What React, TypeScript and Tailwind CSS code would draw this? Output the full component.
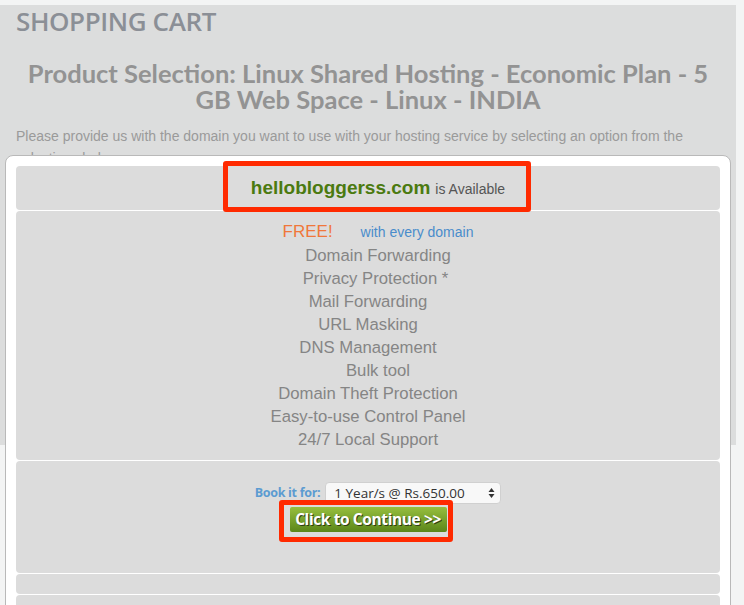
import React from "react";

const features: { label: string; pad: string }[] = [
  { label: "Domain Forwarding", pad: "pl-[20px]" },
  { label: "Privacy Protection *", pad: "pl-[15px]" },
  { label: "Mail Forwarding", pad: "" },
  { label: "URL Masking", pad: "" },
  { label: "DNS Management", pad: "" },
  { label: "Bulk tool", pad: "pl-[20px]" },
  { label: "Domain Theft Protection", pad: "" },
  { label: "Easy-to-use Control Panel", pad: "" },
  { label: "24/7 Local Support", pad: "" },
];

function Section({ className = "", children }: { className?: string; children?: React.ReactNode }) {
  return <div className={`shrink-0 bg-[#dcdcdc] rounded-[4px] ${className}`}>{children}</div>;
}

export default function App() {
  return (
    <div className="relative w-[744px] h-[605px] overflow-hidden bg-[#f3f4f4] font-['Liberation_Sans',Arial,sans-serif]">
      <div className="pt-[5px]">
        {/* page behind the dialog */}
        <div className="w-[736px] h-[440px] bg-[#dcdddd] px-[16px]">
          <h1 className="pt-[1px] text-[26px] leading-[30px] font-semibold text-[#8b8f96] font-['Open_Sans',sans-serif] tracking-[-0.4px]">
            SHOPPING CART
          </h1>
          <h2 className="mt-[24px] text-center text-[25.5px] leading-[26px] font-bold text-[#939393] font-['Lato',sans-serif]">
            Product Selection: Linux Shared Hosting - Economic Plan - 5
            <br />
            GB Web Space - Linux - INDIA
          </h2>
          <p className="mt-[13px] text-[14px] leading-[22px] text-[#9a9a9a]">
            Please provide us with the domain you want to use with your hosting service by selecting an option from the
            selections below.
          </p>
        </div>
      </div>

      {/* dialog */}
      <div className="absolute left-[5px] top-[155px] w-[726px] h-[600px] bg-white border border-[#b9b9b9] rounded-[8px] px-[10px] pt-[10px] flex flex-col gap-[1px]">
        <Section className="h-[44px] flex items-center justify-center pt-[1px] pl-[20px]">
          <span className="text-[19px] font-bold text-[#4b7a10]">hellobloggerss.com</span>
          <span className="ml-[5px] pt-[2px] text-[14px] text-[#555555]">is Available</span>
        </Section>

        <Section className="h-[249px] pt-[9px] text-center text-[16.7px] leading-[23px] text-[#858585]">
          <div className="pl-[20px]">
            <span className="text-[17px] text-[#f0773a]">FREE!</span>
            <span className="ml-[28px] text-[14px] text-[#4a8ccb]">with every domain</span>
          </div>
          {features.map((f) => (
            <div key={f.label} className={f.pad}>
              {f.label}
            </div>
          ))}
        </Section>

        <Section className="h-[112px] flex flex-col items-center pt-[21px]">
          <div className="flex items-center gap-[5px] pl-[20px]">
            <span className="text-[12.5px] font-bold text-[#5b9bd1] font-['Open_Sans',sans-serif] tracking-[-0.3px]">
              Book it for:
            </span>
            <div className="w-[176px] h-[22px] bg-[#f8f8f8] border border-[#d0d0d0] rounded-[4px] flex items-center justify-between pl-[8px] pr-[5px] text-[13.5px] text-[#333333] font-['Open_Sans',sans-serif]">
              <span>1 Year/s @ Rs.650.00</span>
              <svg width="7" height="12" viewBox="0 0 7 12">
                <path d="M3.5 1 L6.5 5 L0.5 5 Z" fill="#333" />
                <path d="M3.5 11 L6.5 7 L0.5 7 Z" fill="#333" />
              </svg>
            </div>
          </div>
          <button className="mt-[3px] w-[157px] h-[25px] rounded-[2px] bg-gradient-to-b from-[#97bf3e] to-[#5b8619] text-white text-[15.5px] leading-[25px] font-bold font-['Open_Sans',sans-serif] tracking-[-0.4px] [text-shadow:1px_1px_0_#2f3d12]">
            Click to Continue &gt;&gt;
          </button>
        </Section>

        <Section className="h-[20px]" />
        <Section className="h-[60px]" />

        {/* red annotation boxes */}
        <div className="absolute left-[217px] top-[5px] w-[308px] h-[51px] border-[5px] border-[#ff2a00] rounded-[3px]" />
        <div className="absolute left-[273px] top-[344px] w-[174px] h-[42px] border-[5px] border-[#ff2a00] rounded-[3px]" />
      </div>
    </div>
  );
}
